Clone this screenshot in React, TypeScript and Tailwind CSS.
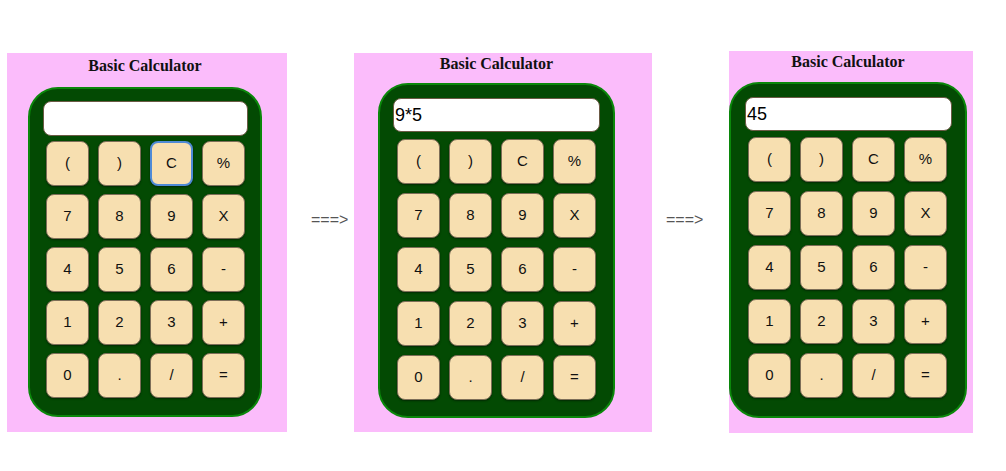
import React from "react";

const keys = ["(", ")", "C", "%", "7", "8", "9", "X", "4", "5", "6", "-", "1", "2", "3", "+", "0", ".", "/", "="];

type CalcProps = {
  panel: string;
  inner: string;
  title: string;
  body: string;
  display: string;
  grid: string;
  value: string;
  focusC?: boolean;
};

function Calc({ panel, inner, title, body, display, grid, value, focusC }: CalcProps) {
  return (
    <div className={panel}>
      <div className={inner}>
        <div className={title}>Basic Calculator</div>
        <div className={body}>
          <div className={display}>{value}</div>
          <div className={grid}>
            {keys.map((k) => (
              <div
                key={k}
                className={
                  focusC && k === "C"
                    ? "w-[43px] h-[45px] flex items-center justify-center rounded-[8px] bg-[#f7dfb0] text-[15px] text-[#111] border-2 border-[#4f8ad6] shadow-[0_1px_2px_rgba(0,0,0,0.45)]"
                    : "w-[43px] h-[45px] flex items-center justify-center rounded-[8px] bg-[#f7dfb0] text-[15px] text-[#111] border border-[#7d6e58] shadow-[0_1px_2px_rgba(0,0,0,0.45)]"
                }
              >
                {k}
              </div>
            ))}
          </div>
        </div>
      </div>
    </div>
  );
}

export default function App() {
  return (
    <div
      className="flex items-start w-[1006px] h-[471px] bg-white overflow-hidden"
      style={{ fontFamily: '"Liberation Sans", Arial, sans-serif' }}
    >
      <Calc
        panel="shrink-0 ml-[7px] mt-[53px] w-[280px] h-[379px] bg-[#fbbcfb] pl-[21px] pt-[4px]"
        inner="w-[234px]"
        title="text-center text-[16px] leading-[18px] h-[18px] mb-[12px] font-bold text-[#111] [font-family:'Liberation_Serif',serif]"
        body="w-[234px] h-[330px] rounded-[30px] border-2 border-[#0b870b] bg-[#034a03] pt-[12px] pl-[13px]"
        display="w-[205px] h-[35px] bg-white rounded-[8px] border border-[#6b5a45] flex items-center pl-[1px] text-[18px] text-black"
        grid="mt-[5px] ml-[3px] grid grid-cols-[repeat(4,43px)] gap-x-[9px] gap-y-[8px]"
        value=""
        focusC
      />
      <div className="shrink-0 w-[67px] mt-[211px] pl-[24px] text-[16px] leading-[18px] text-[#555]">===&gt;</div>
      <Calc
        panel="shrink-0 mt-[53px] w-[298px] h-[379px] bg-[#fbbcfb] pl-[24px] pt-[2px]"
        inner="w-[237px]"
        title="text-center text-[16px] leading-[18px] h-[18px] mb-[10px] font-bold text-[#111] [font-family:'Liberation_Serif',serif]"
        body="w-[237px] h-[335px] rounded-[30px] border-2 border-[#0b870b] bg-[#034a03] pt-[13px] pl-[13px]"
        display="w-[207px] h-[34px] bg-white rounded-[8px] border border-[#6b5a45] flex items-center pl-[1px] text-[18px] text-black"
        grid="mt-[7px] ml-[4px] grid grid-cols-[repeat(4,43px)] gap-x-[9px] gap-y-[9px]"
        value="9*5"
      />
      <div className="shrink-0 w-[77px] mt-[211px] pl-[14px] text-[16px] leading-[18px] text-[#555]">===&gt;</div>
      <Calc
        panel="shrink-0 mt-[51px] w-[244px] h-[382px] bg-[#fbbcfb] pt-[2px]"
        inner="w-[238px]"
        title="text-center text-[16px] leading-[18px] h-[18px] mb-[11px] font-bold text-[#111] [font-family:'Liberation_Serif',serif]"
        body="w-[238px] h-[336px] rounded-[30px] border-2 border-[#0b870b] bg-[#034a03] pt-[13px] pl-[14px]"
        display="w-[207px] h-[34px] bg-white rounded-[8px] border border-[#6b5a45] flex items-center pl-[1px] text-[18px] text-black"
        grid="mt-[6px] ml-[3px] grid grid-cols-[repeat(4,43px)] gap-x-[9px] gap-y-[9px]"
        value="45"
      />
    </div>
  );
}
